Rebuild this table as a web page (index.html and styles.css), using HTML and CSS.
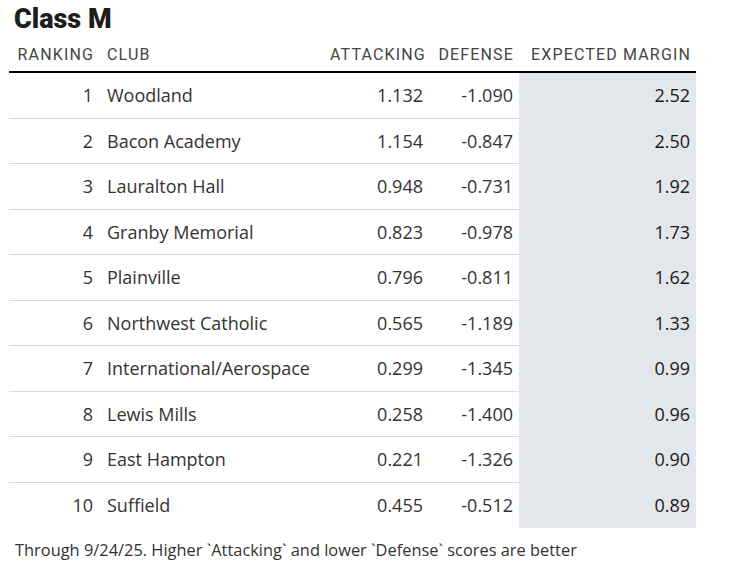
FILE: index.html
```html
<!DOCTYPE html>
<html lang="en">
<head>
<meta charset="utf-8">
<title>Class M</title>
<link rel="stylesheet" href="styles.css">
</head>
<body>
<div class="chart">
  <h1 class="title">Class M</h1>
  <div class="table" role="table">
    <div class="row head" role="row">
      <div class="cell num" role="columnheader">Ranking</div>
      <div class="cell txt" role="columnheader">Club</div>
      <div class="cell num" role="columnheader">Attacking</div>
      <div class="cell num def" role="columnheader">Defense</div>
      <div class="cell num mar" role="columnheader">Expected Margin</div>
    </div>
    <div class="row" role="row"><div class="cell num">1</div><div class="cell txt">Woodland</div><div class="cell num">1.132</div><div class="cell num def">-1.090</div><div class="cell num mar shade">2.52</div></div>
    <div class="row" role="row"><div class="cell num">2</div><div class="cell txt">Bacon Academy</div><div class="cell num">1.154</div><div class="cell num def">-0.847</div><div class="cell num mar shade">2.50</div></div>
    <div class="row" role="row"><div class="cell num">3</div><div class="cell txt">Lauralton Hall</div><div class="cell num">0.948</div><div class="cell num def">-0.731</div><div class="cell num mar shade">1.92</div></div>
    <div class="row" role="row"><div class="cell num">4</div><div class="cell txt">Granby Memorial</div><div class="cell num">0.823</div><div class="cell num def">-0.978</div><div class="cell num mar shade">1.73</div></div>
    <div class="row" role="row"><div class="cell num">5</div><div class="cell txt">Plainville</div><div class="cell num">0.796</div><div class="cell num def">-0.811</div><div class="cell num mar shade">1.62</div></div>
    <div class="row" role="row"><div class="cell num">6</div><div class="cell txt">Northwest Catholic</div><div class="cell num">0.565</div><div class="cell num def">-1.189</div><div class="cell num mar shade">1.33</div></div>
    <div class="row" role="row"><div class="cell num">7</div><div class="cell txt">International/Aerospace</div><div class="cell num">0.299</div><div class="cell num def">-1.345</div><div class="cell num mar shade">0.99</div></div>
    <div class="row" role="row"><div class="cell num">8</div><div class="cell txt">Lewis Mills</div><div class="cell num">0.258</div><div class="cell num def">-1.400</div><div class="cell num mar shade">0.96</div></div>
    <div class="row" role="row"><div class="cell num">9</div><div class="cell txt">East Hampton</div><div class="cell num">0.221</div><div class="cell num def">-1.326</div><div class="cell num mar shade">0.90</div></div>
    <div class="row last" role="row"><div class="cell num">10</div><div class="cell txt">Suffield</div><div class="cell num">0.455</div><div class="cell num def">-0.512</div><div class="cell num mar shade">0.89</div></div>
  </div>
  <p class="note">Through 9/24/25. Higher `Attacking` and lower `Defense` scores are better</p>
</div>
</body>
</html>
```
FILE: styles.css
```css
html, body {
  margin: 0;
  padding: 0;
  background: #fff;
}

.chart {
  padding-top: 4px;
  font-family: "Open Sans", "Liberation Sans", sans-serif;
  color: #333;
}

.title {
  margin: 0 0 0 14px;
  font-family: Roboto, "Liberation Sans", sans-serif;
  font-weight: 900;
  font-size: 27px;
  line-height: 30px;
  color: #1d1d1d;
  letter-spacing: 0;
}

.table {
  margin-left: 9px;
  width: 687px;
}

.row {
  display: grid;
  grid-template-columns: 91px 230px 100px 89px 177px;
}

.cell {
  height: 44.5px;
  line-height: 44.5px;
  font-size: 18px;
  white-space: nowrap;
  border-bottom: 1px solid #d9d9d9;
}

.num {
  text-align: right;
  padding-right: 7px;
}

.txt {
  text-align: left;
  padding-left: 7px;
}

.def,
.mar {
  padding-right: 6px;
}

.mar {
  color: #1a1a1a;
}

.shade {
  background: #e3e6ea;
  border-bottom-color: #e3e6ea;
}

.last .cell {
  border-bottom-color: transparent;
}

.last .shade {
  border-bottom-color: #e3e6ea;
}

.head .cell {
  height: auto;
  padding-top: 10.5px;
  padding-bottom: 6.5px;
  line-height: 20px;
  font-family: Roboto, "Liberation Sans", sans-serif;
  font-size: 16px;
  letter-spacing: 1.15px;
  text-transform: uppercase;
  color: #444;
  border-bottom: 2px solid #000;
}

.head .num {
  padding-right: 6px;
}

.head .def,
.head .mar {
  padding-right: 5px;
}

.note {
  margin: 12px 0 0 15px;
  font-size: 16.4px;
  line-height: 20px;
  color: #333;
}
```
